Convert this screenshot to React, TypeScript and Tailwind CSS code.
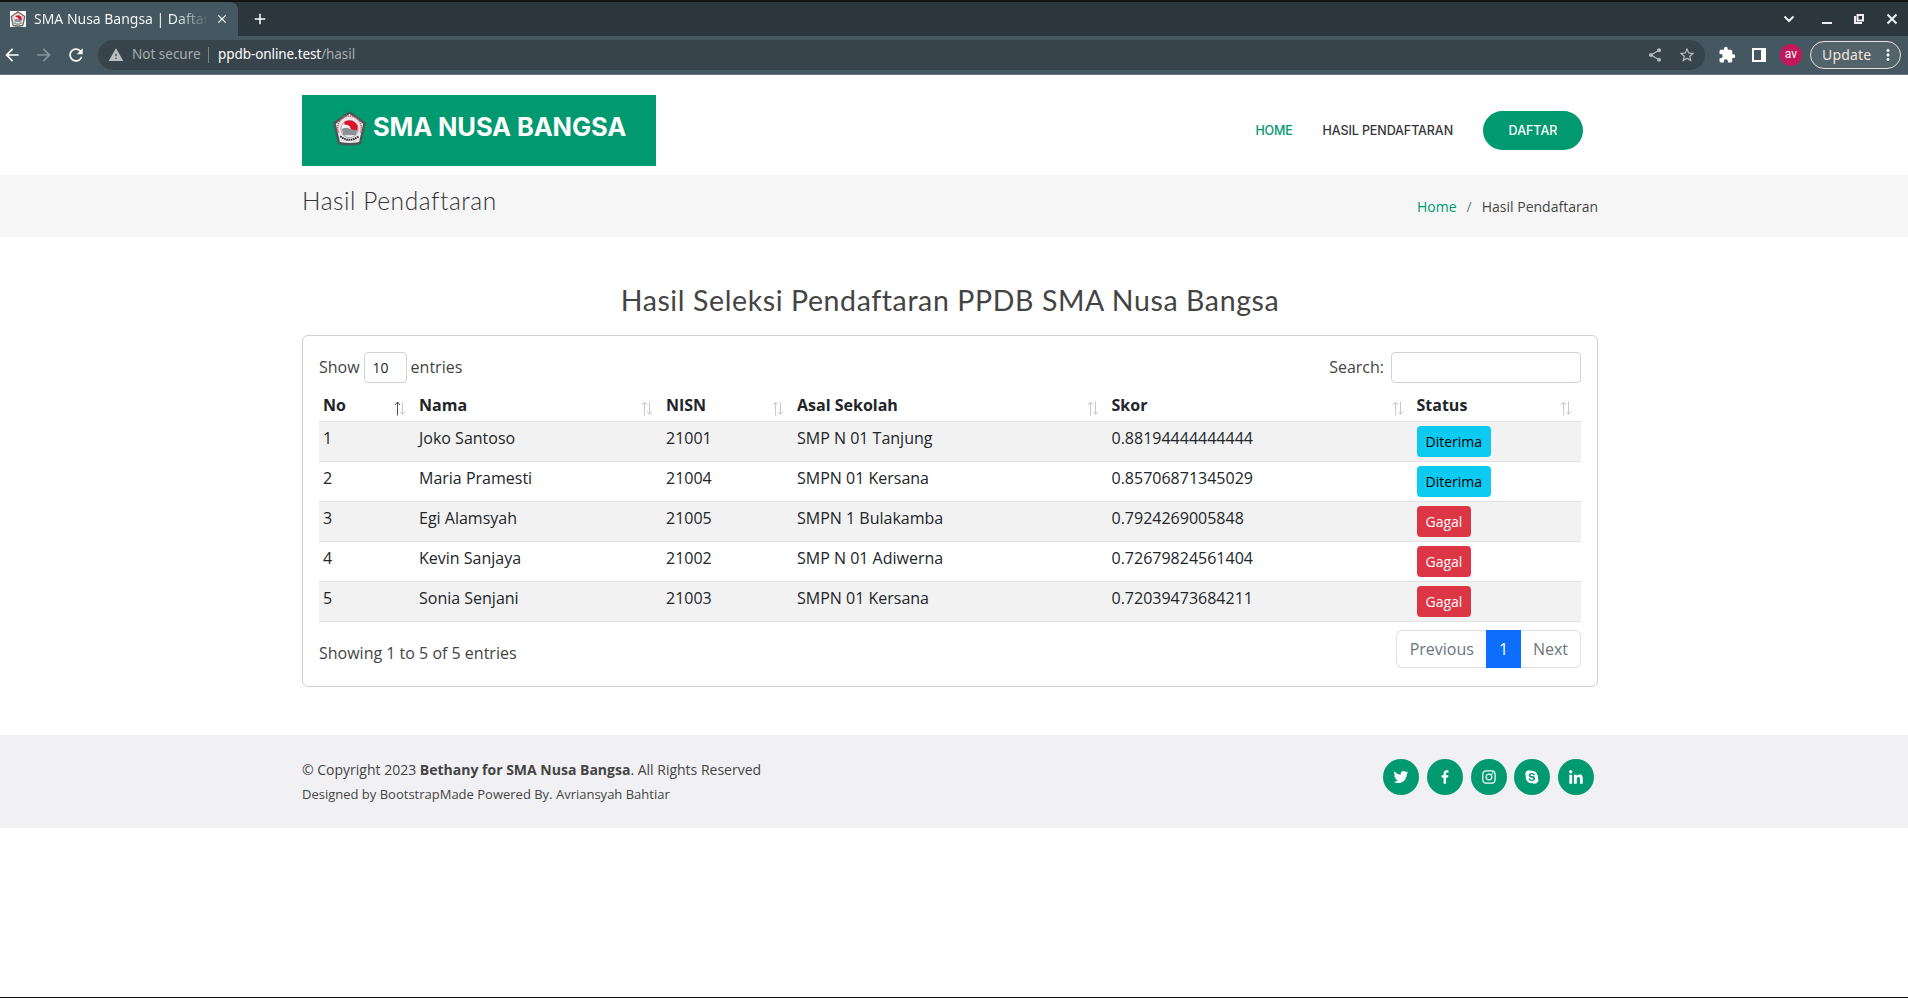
import { MdArrowBack, MdArrowForward, MdRefresh, MdWarning, MdShare, MdStarBorder, MdExtension, MdMoreVert, MdClose, MdAdd } from "react-icons/md";
import { BiLogoTwitter, BiLogoFacebook, BiLogoInstagram, BiLogoSkype, BiLogoLinkedin } from "react-icons/bi";

function Crest({ className }: { className: string }) {
  return (
    <svg viewBox="0 0 34 34" className={className}>
      <path d="M17 1.2 32 11.5 27.5 31.5Q17 34 6.500 31.500L2 11.500Z" fill="#4a5656" stroke="#4a5656" strokeWidth="1.500" strokeLinejoin="round" />
      <path d="M17 3 30.300 12.300 26.300 30Q17 32 7.700 30L3.700 12.300Z" fill="#e9e9e9" />
      <path d="M6.500 21A11.500 11.500 0 1 1 27.500 21" fill="none" stroke="#d9606a" strokeWidth="1.600" strokeDasharray="1.300 .8" />
      <circle cx="17" cy="17.500" r="8.400" fill="#f7f7f7" stroke="#777" strokeWidth=".6" />
      <path d="M12 10.500Q20 6.500 24.800 14V19H18Q19 13 12 13Z" fill="#df1029" />
      <path d="M9.500 17.500Q14 15 17.500 17.500L24.500 19 23 23.500H11Z" fill="#8c9097" />
      <path d="M8 24.500Q17 31.500 26 24.500" fill="none" stroke="#333" strokeWidth="2" strokeDasharray="1.600 .6" />
    </svg>
  );
}

function SortArrows({ active }: { active?: boolean }) {
  return (
    <svg width="12" height="15" viewBox="0 0 12 15" className="shrink-0" fill="none">
      <g stroke={active ? "#55505c" : "#c9cacb"} strokeWidth="1">
        <path d="M3.500 14.500V1" />
        <path d="M1 4 3.500 1 6 4" />
      </g>
      <g stroke="#c9cacb" strokeWidth="1">
        <path d="M8.500 .5V13" />
        <path d="M6 10.500 8.500 13.500 11 10.500" />
      </g>
    </svg>
  );
}

const columns = ["No", "Nama", "NISN", "Asal Sekolah", "Skor", "Status"];
const rows = [
  ["1", "Joko Santoso", "21001", "SMP N 01 Tanjung", "0.88194444444444", "Diterima"],
  ["2", "Maria Pramesti", "21004", "SMPN 01 Kersana", "0.85706871345029", "Diterima"],
  ["3", "Egi Alamsyah", "21005", "SMPN 1 Bulakamba", "0.7924269005848", "Gagal"],
  ["4", "Kevin Sanjaya", "21002", "SMP N 01 Adiwerna", "0.72679824561404", "Gagal"],
  ["5", "Sonia Senjani", "21003", "SMPN 01 Kersana", "0.72039473684211", "Gagal"],
];
const rowGrid = "grid grid-cols-[96px_247px_131px_314.5px_305px_168.500px]";
const socials = [BiLogoTwitter, BiLogoFacebook, BiLogoInstagram, BiLogoSkype, BiLogoLinkedin];

function BrowserBar() {
  return (
    <div className="h-[75px] shrink-0 border-t-2 border-b border-t-[#131313] border-b-[#67777f] bg-[#455861] font-['Noto_Sans',sans-serif] text-white">
      <div className="flex h-[34px] bg-[#2c373d]">
        <div className="flex h-[34px] w-[238px] items-center rounded-tr-[8px] bg-[#455861] pl-[10px]">
          <Crest className="size-4 bg-white" />
          <div className="mb-[2px] ml-2 w-[175px] overflow-hidden bg-linear-to-r from-white from-80% to-transparent bg-clip-text text-[14px] tracking-[-0.02px] whitespace-nowrap text-transparent">SMA Nusa Bangsa | Daftar</div>
          <MdClose className="ml-[6px] size-[14px]" />
        </div>
        <MdAdd className="mt-[8px] ml-[13px] size-[18px]" />
        <div className="ml-auto flex items-center">
          <svg width="130" height="34" viewBox="0 0 130 34" fill="none" stroke="#eef0f1" strokeWidth="2">
            <path d="m6.500 14.500 4.500 4.500 4.500-4.500" />
            <path d="M44 21h10" />
            <path d="M79.500 13h5.500v5.500h-5.500z" />
            <path d="M77 14v7h7" />
            <path d="m109.500 12.500 9 9m0-9-9 9" />
          </svg>
        </div>
      </div>
      <div className="flex h-[38px] items-center">
        <MdArrowBack className="ml-[2px] size-5" />
        <MdArrowForward className="ml-3 size-5 text-[#87949a]" />
        <MdRefresh className="ml-3 size-5" />
        <div className="ml-3 flex h-[30px] w-[1607px] items-center rounded-full bg-[#38444b] pl-[10px] text-[13.500px]">
          <MdWarning className="size-4 text-[#b9c0c4]" />
          <span className="mb-[2px] ml-2 w-[68px] whitespace-nowrap text-[#a5adb1]">Not secure</span>
          <span className="mr-[9px] ml-2 h-4 w-px bg-[#77838a]" />
          <span className="mb-[2px] tracking-[-0.08px]">ppdb-online.test<span className="text-[#a5adb1]">/hasil</span></span>
          <MdShare className="mr-[15px] ml-auto size-4 text-[#b6bec2]" />
          <MdStarBorder className="mr-[9px] size-[18px] text-[#b6bec2]" />
        </div>
        <MdExtension className="ml-[13px] size-[18px]" />
        <svg className="ml-4" width="14" height="14" viewBox="0 0 14 14"><path d="M0 0h14v14H0zM2 2v10h7V2z" fill="#fff" fillRule="evenodd" /></svg>
        <span className="ml-[14px] flex size-[22px] items-center justify-center rounded-full bg-[#c2185b] pb-[2px] font-['Roboto',sans-serif] text-[12px]">av</span>
        <div className="ml-2 flex h-7 w-[91px] items-center rounded-full border border-[#e8dedb] bg-[#52636b] pl-[11px] text-[14px]"><span className="mb-[2px] tracking-[0.200px] text-[#f3e4df]">Update</span><MdMoreVert className="ml-[8px] size-[18px]" /></div>
      </div>
    </div>
  );
}

export default function App() {
  return (
    <div className="flex h-[998px] flex-col overflow-hidden border-b border-[#131313] bg-white font-['Open_Sans',sans-serif] text-[#444]">
      <BrowserBar />
      <header className="flex h-[100px] shrink-0 justify-between pr-[325px] pl-[302px] font-['Inter',sans-serif]">
        <div className="mt-5 flex h-[71px] w-[354px] bg-[#009970] pt-[16px] pl-[30px]">
          <Crest className="size-[35px]" />
          <h1 className="ml-[6px] h-8 self-start text-[25.500px] leading-8 font-bold tracking-[-0.120px] whitespace-nowrap text-white">SMA NUSA BANGSA</h1>
        </div>
        <nav className="mt-9 flex h-[39px] items-center self-start text-[12.500px] font-medium text-[#36343a]">
          <a className="mt-px tracking-[-0.200px] text-[#009970]">HOME</a>
          <a className="mt-px ml-[30px] tracking-[-0.100px]">HASIL PENDAFTARAN</a>
          <a className="ml-[30px] flex h-[39px] w-[100px] items-center justify-center rounded-full bg-[#009970] pt-px text-white">DAFTAR</a>
        </nav>
      </header>
      <section className="flex h-[62px] shrink-0 justify-between bg-[#f6f6f6] pr-[310px] pl-[302px]">
        <h2 className="mt-[11px] font-['Lato',sans-serif] text-[24.500px] leading-[29px] font-light tracking-[0.570px] text-[#333]">Hasil Pendaftaran</h2>
        <div className="mt-[21px] flex text-[14px] leading-[21px]">
          <a className="text-[#009970]">Home</a><span className="px-[10px] text-[#6c757d]">/</span><span>Hasil Pendaftaran</span>
        </div>
      </section>
      <main className="w-[1900px] shrink-0 px-[302px] pt-[46px]">
        <h3 className="text-center font-['Lato',sans-serif] text-[28.500px] leading-[34px] tracking-[0.600px]">Hasil Seleksi Pendaftaran PPDB SMA Nusa Bangsa</h3>
        <div className="mt-[18px] h-[352px] w-[1296px] rounded-[6px] border border-[#cfcfcf] p-4">
          <div className="flex h-[31px] items-center text-[16px]">
            <span className="mb-[2px]">Show</span>
            <span className="mx-1 flex h-[31px] w-[43px] items-center rounded-[4px] border border-[#ced4da] pl-2 text-[14px] text-[#212529]">10</span>
            <span className="mb-[2px]">entries</span>
            <span className="mb-[2px] ml-auto">Search:</span>
            <input className="ml-[7px] h-[31px] w-[190px] rounded-[4px] border border-[#ced4da]" />
          </div>
          <div className="mt-[6px] text-[16px] leading-6 text-[#212529]">
            <div className={`${rowGrid} h-[33px] border-b border-[#dee2e6] font-bold`}>
              {columns.map((c, i) => (
                <div key={c} className="flex justify-between pt-1 pr-[9px] pl-1"><span>{c}</span><span className="mt-2"><SortArrows active={i === 0} /></span></div>
              ))}
            </div>
            {rows.map((r, n) => (
              <div key={r[0]} className={`${rowGrid} h-10 border-b border-[#dee2e6] ${n % 2 === 0 ? "bg-[#f2f2f2]" : ""}`}>
                {r.slice(0, 5).map((v, i) => <div key={i} className="pt-1 pl-1">{v}</div>)}
                <div className="pt-1 pl-1">
                  <span className={`inline-flex h-[31px] items-center rounded-[4px] px-[9px] text-[14px] ${r[5] === "Gagal" ? "bg-[#dc3545] text-white" : "bg-[#0dcaf0] text-black"}`}>{r[5]}</span>
                </div>
              </div>
            ))}
          </div>
          <div className="flex justify-between pt-2">
            <span className="mt-[11px] leading-6">Showing 1 to 5 of 5 entries</span>
            <div className="flex h-[38px] text-[#6c757d]">
              <span className="flex items-center rounded-l-[6px] border border-r-0 border-[#dee2e6] pr-[12.500px] pl-[13px]">Previous</span>
              <span className="flex w-[34.500px] items-center justify-center bg-[#0d6efd] text-white">1</span>
              <span className="flex items-center rounded-r-[6px] border border-l-0 border-[#dee2e6] px-3">Next</span>
            </div>
          </div>
        </div>
      </main>
      <footer className="mt-12 flex h-[93px] shrink-0 justify-between bg-[#f1f1f3] pr-[314px] pl-[302px]">
        <div>
          <p className="mt-6 text-[14px] leading-[21px]">© Copyright 2023 <strong>Bethany for SMA Nusa Bangsa</strong>. All Rights Reserved</p>
          <p className="mt-[5px] text-[13px] leading-[19px]">Designed by BootstrapMade Powered By. Avriansyah Bahtiar</p>
        </div>
        <div className="mt-6 flex gap-[7.700px]">
          {socials.map((Icon, i) => <a key={i} className="flex size-9 items-center justify-center rounded-full bg-[#009970] pb-px text-white"><Icon className="size-[18px]" /></a>)}
        </div>
      </footer>
    </div>
  );
}
